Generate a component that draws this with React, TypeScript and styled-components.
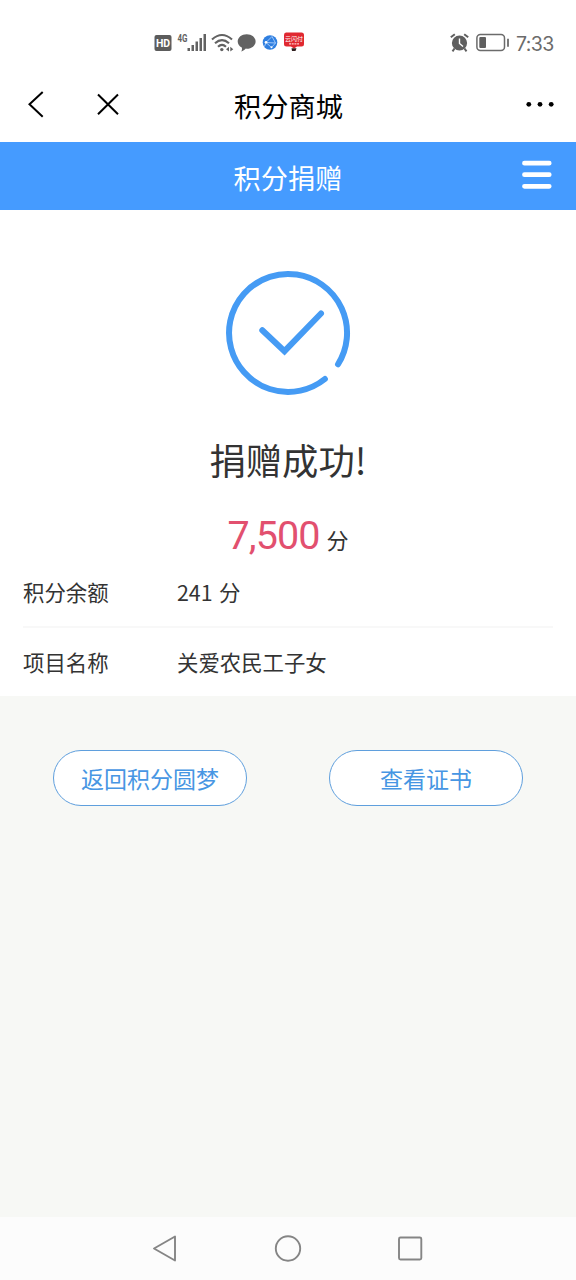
import React from "react";
import styled, { createGlobalStyle } from "styled-components";

const GlobalStyle = createGlobalStyle`
  * { box-sizing: border-box; }
  body {
    margin: 0;
    background: #f7f8f5;
    font-family: "Noto Sans CJK SC", sans-serif;
    color: #333;
  }
`;

const Screen = styled.div`
  width: 576px;
  height: 1280px;
  display: flex;
  flex-direction: column;
  overflow: hidden;
`;

const StatusBar = styled.header`
  height: 66px;
  flex: none;
  padding: 28px 21px 8px 150px;
  background: #fff;
  display: flex;
  justify-content: space-between;
`;

const StatusGroup = styled.div`
  display: flex;
  height: 30px;
  svg { display: block; flex: none; }
`;

const Clock = styled.span`
  font: 400 19.5px/33px Inter, sans-serif;
  letter-spacing: -0.6px;
  color: #6b6b6b;
  width: 39px;
  margin-left: 2px;
  white-space: nowrap;
`;

const TitleBar = styled.div`
  height: 76px;
  flex: none;
  padding: 0 21px 0 22px;
  background: #fff;
  display: grid;
  grid-template-columns: 110px 1fr 110px;
  align-items: center;
`;

const TitleText = styled.h1<{ $color: string }>`
  margin: 0;
  padding-top: 2px;
  font-size: 27.2px;
  line-height: 40px;
  font-weight: 400;
  text-align: center;
  color: ${(p) => p.$color};
`;

const BarActions = styled.div<{ $end?: boolean }>`
  display: flex;
  gap: 44px;
  justify-content: ${(p) => (p.$end ? "flex-end" : "flex-start")};
  svg { display: block; }
`;

const PageBar = styled.div`
  height: 68px;
  flex: none;
  padding: 0 22px;
  background: #459bff;
  display: grid;
  grid-template-columns: 110px 1fr 110px;
  align-items: center;
`;

const Result = styled.section`
  height: 486px;
  flex: none;
  background: #fff;
  padding: 58px 23px 0;
  display: flex;
  flex-direction: column;
  align-items: center;
  & > * { flex: none; }
`;

const Headline = styled.h2`
  margin: 34px 0 0;
  font-size: 36.3px;
  line-height: 54px;
  font-weight: 400;
  color: #333;
`;

const Amount = styled.div`
  display: flex;
  align-items: baseline;
  height: 49px;
  margin-top: 22px;
  gap: 7px;
  line-height: 56px;
  font-size: 22px;
`;

const AmountValue = styled.span`
  font-family: Roboto, sans-serif;
  font-size: 39.5px;
  letter-spacing: -0.9px;
  color: #e2506f;
`;

const Details = styled.dl`
  width: 100%;
  margin: 0;
`;

const DetailRow = styled.div`
  display: flex;
  height: 69px;
  align-items: center;
  font-size: 21.4px;
  line-height: 32px;
  word-spacing: 1.5px;
  & + & { border-top: 2px solid #f8f8f8; height: 70px; }
`;

const DetailLabel = styled.dt`
  width: 154px;
`;

const DetailValue = styled.dd`
  margin: 0;
`;

const Actions = styled.section`
  flex: 1;
  padding: 54px 53px 0;
  display: flex;
  justify-content: space-between;
  align-items: flex-start;
  background: #f7f8f5;
`;

const PillButton = styled.button`
  width: 194px;
  height: 56px;
  padding: 0;
  border: 1px solid #5f9fdd;
  border-radius: 28px;
  background: #fff;
  color: #4796e3;
  font: 400 23px/34px "Noto Sans CJK SC", sans-serif;
`;

const SystemNav = styled.nav`
  height: 63px;
  flex: none;
  background: #fcfcfc;
  display: flex;
  justify-content: center;
  gap: 94px;
  padding-top: 17px;
`;

const HdIcon = () => (
  <svg width="25" height="30" viewBox="150 28 25 30">
    <rect x="154.5" y="35" width="17" height="16" rx="2" fill="#5c5c5c" />
    <text x="163" y="47" textAnchor="middle" fontFamily="Roboto, sans-serif" fontWeight="700" fontSize="10.5" fill="#fff">HD</text>
  </svg>
);

const SignalIcon = () => (
  <svg width="35" height="30" viewBox="175 28 35 30" fill="#626262">
    <text x="177.500" y="41.500" fontFamily="Roboto, sans-serif" fontWeight="700" fontSize="10" textLength="10" lengthAdjust="spacingAndGlyphs">4G</text>
    <rect x="187.5" y="48" width="2.5" height="3" />
    <rect x="191.5" y="45" width="2.5" height="6" />
    <rect x="195.5" y="41.5" width="2.5" height="9.5" />
    <rect x="199.5" y="38" width="2.5" height="13" />
    <rect x="203.5" y="34" width="2.5" height="17" />
  </svg>
);

const WifiIcon = () => (
  <svg width="25" height="30" viewBox="210 28 25 30" fill="none" stroke="#626262" strokeWidth="2.1">
    <path d="M212 39.500Q222 30.500 232 39.500M215 43.300Q222 37 229 43.300M218 46.800Q222 43 226 46.800" />
    <circle cx="221.800" cy="49.600" r="1.700" fill="#626262" stroke="none" />
    <path d="M229 46.800v4.800l-3-2.400zM230.300 46.800v4.800l3-2.400z" fill="#626262" stroke="none" />
  </svg>
);

const ChatIcon = () => (
  <svg width="24" height="30" viewBox="235 28 24 30">
    <path d="M246.700 34.200c5.100 0 8.900 3.200 8.900 7.200s-3.900 7.300-8.900 7.300l-.9-.1c-1.200 1.500-2.600 2.500-4.700 2.900.9-1.200 1.100-2.600.7-4.100-2.500-1.200-4.100-3.400-4.100-6 0-4 3.900-7.200 9-7.200z" fill="#626262" />
  </svg>
);

const NetworkIcon = () => (
  <svg width="22" height="30" viewBox="259 28 22 30">
    <circle cx="270" cy="42.500" r="7.300" fill="#2f7fe0" />
    <path d="M272 36.500L266 42.500L271.500 47.500L275.500 43L272 36.500M266 42.500L275.500 43M266 42.500L264.500 46.500" fill="none" stroke="#b9d7ff" strokeWidth="0.8" />
    <circle cx="266" cy="42.300" r="1.300" fill="#fff" />
    <circle cx="271.500" cy="47.300" r="1" fill="#fff" />
  </svg>
);

const BadgeIcon = () => (
  <svg width="26" height="30" viewBox="281 28 26 30">
    <path d="M286 32.500h15.500q2.500 0 2.500 2.500v9q0 2.500-2.500 2.500H297l-3 2-3-2h-4.500q-2.500 0-2.500-2.500v-9q0-2.500 2-2.500z" fill="#e02830" />
    <text x="294" y="41" textAnchor="middle" fontFamily="Noto Sans CJK SC, sans-serif" fontSize="6" fill="#fff">云闪付</text>
    <path d="M289 43.800h10" stroke="#ffc9c9" strokeWidth="1.200" strokeDasharray="2 .7" />
    <path d="M291.500 48.300h5l-1 2.700h-3.500z" fill="#302020" />
  </svg>
);

const AlarmIcon = () => (
  <svg width="26" height="30" viewBox="448 28 26 30" fill="none">
    <circle cx="459.500" cy="43" r="7.600" fill="#5f5f5f" />
    <path d="M450.800 37.300l4-3M468.200 37.300l-4-3M454.500 48.500l-2 2.800M464.500 48.500l2 2.800" stroke="#5f5f5f" strokeWidth="2" />
    <path d="M459.500 38.500v5l3.500 3" stroke="#fff" strokeWidth="1.400" />
  </svg>
);

const BatteryIcon = () => (
  <svg width="40" height="30" viewBox="474 28 40 30">
    <rect x="476.900" y="34.400" width="27.600" height="16.200" rx="3.500" fill="none" stroke="#6b6b6b" strokeWidth="1.500" />
    <rect x="479.300" y="37" width="6.700" height="11" rx="1" fill="#5f5f5f" />
    <path d="M508 38.800v8" stroke="#6b6b6b" strokeWidth="1.800" />
  </svg>
);

const SuccessIcon = () => (
  <svg width="130" height="130" viewBox="223 268 130 130" fill="none" stroke="#459bf4" strokeWidth="6" strokeLinecap="round">
    <path d="M324.900 379A59 59 0 1 1 338.030 364.270" />
    <path d="M262.300 330.300L284.500 351.200L321 313.500" strokeLinejoin="miter" />
  </svg>
);

export default function App() {
  return (
    <>
      <GlobalStyle />
      <Screen>
        <StatusBar>
          <StatusGroup>
            <HdIcon />
            <SignalIcon />
            <WifiIcon />
            <ChatIcon />
            <NetworkIcon />
            <BadgeIcon />
          </StatusGroup>
          <StatusGroup>
            <AlarmIcon />
            <BatteryIcon />
            <Clock>7:33</Clock>
          </StatusGroup>
        </StatusBar>

        <TitleBar>
          <BarActions>
            <svg width="28" height="28" viewBox="22 90 28 28" fill="none" stroke="#000" strokeWidth="2">
              <path d="M42.700 92L29.500 104.300L42.700 116.700" />
            </svg>
            <svg width="28" height="28" viewBox="94 90 28 28" fill="none" stroke="#000" strokeWidth="2">
              <path d="M98 94.500L118 114.300M118 94.500L98 114.300" />
            </svg>
          </BarActions>
          <TitleText $color="#000">积分商城</TitleText>
          <BarActions $end>
            <svg width="34" height="28" viewBox="521 90 34 28" fill="#000">
              <circle cx="528.800" cy="104.300" r="2.400" />
              <circle cx="540" cy="104.300" r="2.400" />
              <circle cx="551.200" cy="104.300" r="2.400" />
            </svg>
          </BarActions>
        </TitleBar>

        <PageBar>
          <span />
          <TitleText $color="#fff">积分捐赠</TitleText>
          <BarActions $end>
            <svg width="34" height="34" viewBox="520 159 34 34" stroke="#fff" strokeWidth="4.800" strokeLinecap="round">
              <path d="M524.500 163.200h24.700M524.500 174.700h24.700M524.500 186.300h24.700" />
            </svg>
          </BarActions>
        </PageBar>

        <Result>
          <SuccessIcon />
          <Headline>捐赠成功!</Headline>
          <Amount>
            <AmountValue>7,500</AmountValue>
            <span>分</span>
          </Amount>
          <Details>
            <DetailRow>
              <DetailLabel>积分余额</DetailLabel>
              <DetailValue>241 分</DetailValue>
            </DetailRow>
            <DetailRow>
              <DetailLabel>项目名称</DetailLabel>
              <DetailValue>关爱农民工子女</DetailValue>
            </DetailRow>
          </Details>
        </Result>

        <Actions>
          <PillButton>返回积分圆梦</PillButton>
          <PillButton>查看证书</PillButton>
        </Actions>

        <SystemNav>
          <svg width="28" height="28" viewBox="152 1234 28 28" fill="none" stroke="#858585" strokeWidth="1.900" strokeLinejoin="round">
            <path d="M154 1248.500L175 1236.500V1260.500Z" />
          </svg>
          <svg width="28" height="28" viewBox="274 1234 28 28" fill="none" stroke="#858585" strokeWidth="1.900">
            <circle cx="288" cy="1248.500" r="12.200" />
          </svg>
          <svg width="28" height="28" viewBox="396 1234 28 28" fill="none" stroke="#858585" strokeWidth="1.900">
            <rect x="399" y="1237.500" width="22.300" height="22" rx="1.500" />
          </svg>
        </SystemNav>
      </Screen>
    </>
  );
}
